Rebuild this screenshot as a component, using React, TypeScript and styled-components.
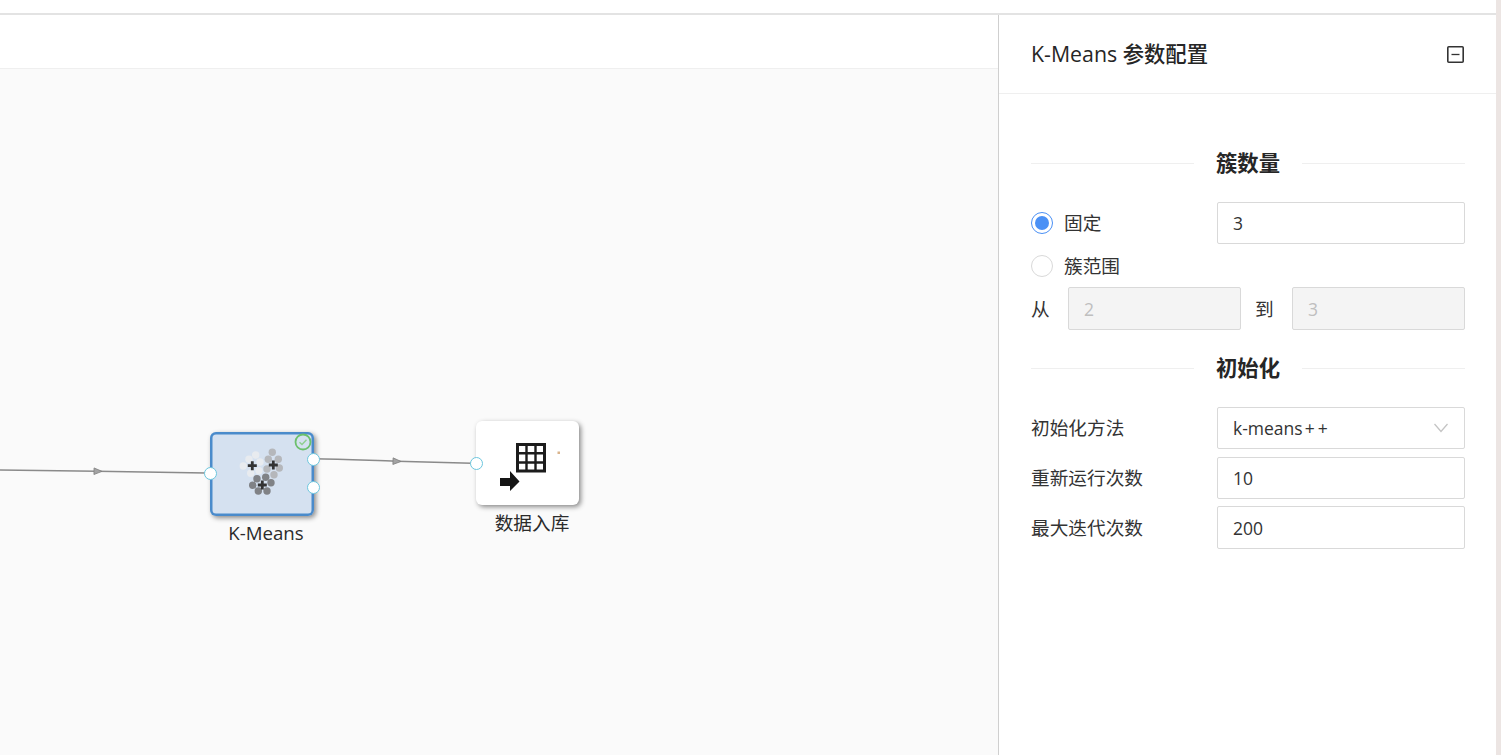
import React from 'react';
import styled, { createGlobalStyle } from 'styled-components';

const GlobalStyle = createGlobalStyle`
  html, body {
    margin: 0;
    padding: 0;
    height: 100%;
    overflow: hidden;
    background: #fff;
  }
  * {
    box-sizing: border-box;
  }
`;

const FONT = `"Open Sans", "Noto Sans CJK SC", sans-serif`;

const Page = styled.div`
  width: 1501px;
  height: 755px;
  display: flex;
  font-family: ${FONT};
  color: #262626;
  background: #fff;
  overflow: hidden;
`;

const Main = styled.div`
  width: 1496px;
  flex: none;
  display: flex;
  flex-direction: column;
`;

const ScrollStrip = styled.div`
  flex: 1;
  background: #ece5e3;
`;

const TopBar = styled.div`
  height: 15px;
  flex: none;
  background: #fff;
  border-bottom: 2px solid #e3e3e3;
`;

const Body = styled.div`
  flex: 1;
  display: flex;
  min-height: 0;
`;

const Workspace = styled.div`
  width: 998px;
  flex: none;
  display: flex;
  flex-direction: column;
`;

const Toolbar = styled.div`
  height: 54px;
  flex: none;
  background: #fff;
  border-bottom: 1px solid #efefef;
`;

const Canvas = styled.div`
  flex: 1;
  position: relative;
  background: #fafafa;
  overflow: hidden;
`;

const Edges = styled.svg`
  position: absolute;
  left: 0;
  top: 0;
  width: 998px;
  height: 686px;
`;

const Node = styled.div<{ $left: number; $top: number; $width: number; $selected?: boolean }>`
  position: absolute;
  left: ${p => p.$left}px;
  top: ${p => p.$top}px;
  width: ${p => p.$width}px;
  height: 84px;
  border-radius: 6px;
  background: ${p => (p.$selected ? '#d5e1f0' : '#fff')};
  box-shadow: ${p => (p.$selected ? 'inset 0 0 0 2.5px #4a8bcb, ' : '')}2px 2px 5px rgba(0, 0, 0, 0.45);
`;

const NodeArt = styled.svg`
  position: absolute;
  left: 0;
  top: 0;
  width: 104px;
  height: 84px;
`;

const NodeLabel = styled.div<{ $top: number }>`
  position: absolute;
  left: -4px;
  top: ${p => p.$top}px;
  width: 120px;
  text-align: center;
  font-size: 18.67px;
  line-height: 22px;
  color: #2b2b2b;
`;

const Port = styled.span<{ $x: number; $y: number }>`
  position: absolute;
  left: ${p => p.$x - 6.5}px;
  top: ${p => p.$y - 6.5}px;
  width: 13px;
  height: 13px;
  border-radius: 50%;
  background: #fff;
  border: 1.5px solid #6cc6de;
`;

const Panel = styled.aside`
  width: 498px;
  flex: none;
  display: flex;
  flex-direction: column;
  background: #fff;
  border-left: 1px solid #cfcfcf;
`;

const PanelHeader = styled.div`
  height: 79px;
  flex: none;
  display: flex;
  align-items: center;
  justify-content: space-between;
  padding: 0 32px;
  border-bottom: 1px solid #efefef;
`;

const PanelTitle = styled.div`
  font-size: 21.33px;
  line-height: 28px;
  font-weight: 500;
  color: #262626;
`;

const PanelBody = styled.div`
  padding: 55px 31px 0 32px;
  display: flex;
  flex-direction: column;
`;

const Divider = styled.div`
  display: flex;
  align-items: center;
  gap: 22px;
  height: 28px;
  margin-bottom: 25px;
  font-size: 21.33px;
  font-weight: 700;
  line-height: 28px;
  color: #262626;
  &::before,
  &::after {
    content: '';
    flex: 1;
    height: 1px;
    background: #efefef;
  }
`;

const Row = styled.div<{ $mb: number }>`
  display: grid;
  grid-template-columns: 186px 248px;
  align-items: center;
  margin-bottom: ${p => p.$mb}px;
`;

const FieldLabel = styled.div`
  font-size: 18.67px;
  line-height: 24px;
  color: #333;
`;

const RangeTo = styled(FieldLabel)`
  padding-left: 14px;
`;

const RadioLabel = styled.label`
  display: flex;
  align-items: center;
  gap: 11px;
  font-size: 18.67px;
  line-height: 24px;
  color: #333;
`;

const RadioRow = styled(RadioLabel)`
  height: 42px;
`;

const RadioDot = styled.span<{ $checked?: boolean }>`
  width: 22px;
  height: 22px;
  border-radius: 50%;
  background: #fff;
  border: 1px solid ${p => (p.$checked ? '#4a90f5' : '#d9d9d9')};
  display: flex;
  align-items: center;
  justify-content: center;
  &::after {
    content: '';
    display: ${p => (p.$checked ? 'block' : 'none')};
    width: 14px;
    height: 14px;
    border-radius: 50%;
    background: #4a90f5;
  }
`;

const Field = styled.div<{ $disabled?: boolean; $height?: number }>`
  height: ${p => p.$height ?? 42}px;
  display: flex;
  align-items: center;
  justify-content: space-between;
  padding: 0 15px;
  border: 1px solid #d9d9d9;
  border-radius: 2px;
  font-size: 17.5px;
  color: ${p => (p.$disabled ? '#bfbfbf' : '#333')};
  background: ${p => (p.$disabled ? '#f4f4f4' : '#fff')};
`;

const PlusSigns = styled.span`
  letter-spacing: 3px;
  margin-left: 2px;
`;

const RangeRow = styled.div`
  display: grid;
  grid-template-columns: 37px 173px 51px 173px;
  align-items: center;
  margin-bottom: 24px;
`;

function Arrow({ x, y, angle }: { x: number; y: number; angle: number }) {
  return (
    <path
      d="M-4 -3.300 L4 0 L-4 3.300 Z"
      fill="#a3a3a3"
      stroke="#7f7f7f"
      strokeWidth="0.800"
      transform={`translate(${x} ${y}) rotate(${angle})`}
    />
  );
}

const CLUSTERS = [
  { fill: '#e8ebef', cx: 42.3, cy: 33.7, dots: [[45.7, 23], [39, 27.3], [50, 30], [33.3, 34], [49, 38.7], [40.7, 41.3]] },
  { fill: '#b5b7bb', cx: 63.3, cy: 33, dots: [[62.3, 20.3], [58.3, 27.3], [68.3, 27.3], [69.3, 36], [57, 37], [64, 42.7]] },
  { fill: '#808286', cx: 52.3, cy: 53, dots: [[47, 46.7], [55.7, 45.3], [61, 50.7], [42.7, 53.3], [48.3, 59], [57, 59]] },
];

function ClusterIcon() {
  return (
    <NodeArt viewBox="0 0 104 84">
      {CLUSTERS.map(g => (
        <g key={g.cx}>
          {g.dots.map(([x, y]) => (
            <circle key={`${x}-${y}`} cx={x} cy={y} r="3.700" fill={g.fill} />
          ))}
          <path
            d={`M${g.cx - 4.5} ${g.cy}H${g.cx + 4.5}M${g.cx} ${g.cy - 4.5}V${g.cy + 4.5}`}
            stroke="#333"
            strokeWidth="2.800"
          />
        </g>
      ))}
      <circle cx="93" cy="10" r="7.500" fill="#d5e1f0" stroke="#6cc06c" strokeWidth="1.800" />
      <path d="M89.500 10.200L92 12.500L96.500 7.800" fill="none" stroke="#8fcf8f" strokeWidth="1.400" />
    </NodeArt>
  );
}

function TableIcon() {
  return (
    <NodeArt viewBox="0 0 104 84">
      <path d="M41.500 23.500H68.500V50H41.500Z" fill="#fff" stroke="#1c1c1c" strokeWidth="3" />
      <path d="M50.500 23V50M59.500 23V50M41.500 32.300H68.500M41.500 41.500H68.500" stroke="#1c1c1c" strokeWidth="2.400" />
      <path d="M24 57H34V50L43.500 60.500L34 70V65H24Z" fill="#151515" />
      <rect x="81.500" y="30.500" width="2.500" height="2.500" fill="#d9b48c" />
    </NodeArt>
  );
}

function CollapseIcon() {
  return (
    <svg width="17" height="17" viewBox="0 0 17 17">
      <rect x="0.800" y="0.800" width="15.400" height="15.400" rx="1" fill="none" stroke="#333" strokeWidth="1.600" />
      <path d="M4.500 8.500H12.500" stroke="#333" strokeWidth="1.300" />
    </svg>
  );
}

function ChevronIcon() {
  return (
    <svg width="16" height="10" viewBox="0 0 16 10">
      <path d="M1.500 1L8 8.500L14.500 1" fill="none" stroke="#c4c4c4" strokeWidth="1.300" />
    </svg>
  );
}

export default function App() {
  return (
    <Page>
      <GlobalStyle />
      <Main>
        <TopBar />
        <Body>
          <Workspace>
            <Toolbar />
            <Canvas>
              <Edges viewBox="0 69 998 686">
                <path d="M0 470 L97 471.300 L206 473" fill="none" stroke="#8a8a8a" strokeWidth="1.500" />
                <Arrow x={98} y={471.3} angle={1} />
                <path d="M313 458.700 C345 459 370 460.500 397 461.300 L472 463.300" fill="none" stroke="#8a8a8a" strokeWidth="1.500" />
                <Arrow x={397} y={461.3} angle={2} />
              </Edges>

              <Node $left={210} $top={363} $width={104} $selected>
                <ClusterIcon />
                <Port $x={0} $y={41} />
                <Port $x={103} $y={27} />
                <Port $x={103} $y={55} />
                <NodeLabel $top={90}>K-Means</NodeLabel>
              </Node>

              <Node $left={476} $top={352} $width={103}>
                <TableIcon />
                <Port $x={0} $y={42} />
                <NodeLabel $top={91}>数据入库</NodeLabel>
              </Node>
            </Canvas>
          </Workspace>

          <Panel>
            <PanelHeader>
              <PanelTitle>K-Means 参数配置</PanelTitle>
              <CollapseIcon />
            </PanelHeader>
            <PanelBody>
              <Divider>簇数量</Divider>
              <Row $mb={1}>
                <RadioLabel><RadioDot $checked />固定</RadioLabel>
                <Field>3</Field>
              </Row>
              <RadioRow><RadioDot />簇范围</RadioRow>
              <RangeRow>
                <FieldLabel>从</FieldLabel>
                <Field $disabled $height={43}>2</Field>
                <RangeTo>到</RangeTo>
                <Field $disabled $height={43}>3</Field>
              </RangeRow>
              <Divider>初始化</Divider>
              <Row $mb={8}>
                <FieldLabel>初始化方法</FieldLabel>
                <Field>
                  <span>k-means<PlusSigns>++</PlusSigns></span>
                  <ChevronIcon />
                </Field>
              </Row>
              <Row $mb={7}>
                <FieldLabel>重新运行次数</FieldLabel>
                <Field>10</Field>
              </Row>
              <Row $mb={0}>
                <FieldLabel>最大迭代次数</FieldLabel>
                <Field $height={43}>200</Field>
              </Row>
            </PanelBody>
          </Panel>
        </Body>
      </Main>
      <ScrollStrip />
    </Page>
  );
}
